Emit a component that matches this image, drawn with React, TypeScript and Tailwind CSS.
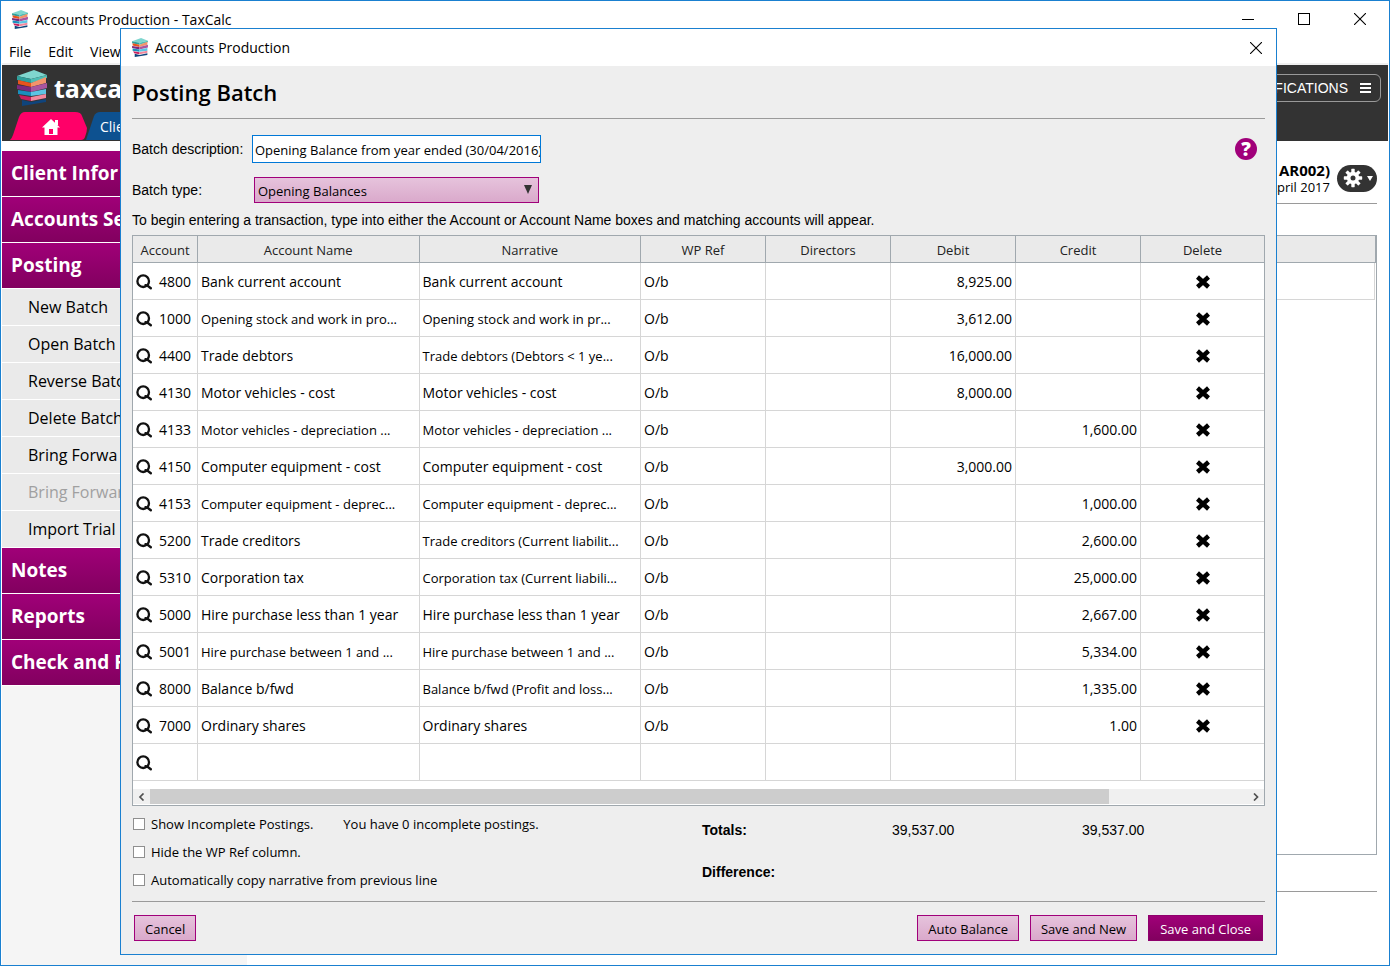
import type { ReactNode } from "react";

type Posting = {
  account: string;
  name: string;
  narrative: string;
  debit?: string;
  credit?: string;
};

const postings: Posting[] = [
  { account: "4800", name: "Bank current account", narrative: "Bank current account", debit: "8,925.00" },
  { account: "1000", name: "Opening stock and work in pro...", narrative: "Opening stock and work in pr...", debit: "3,612.00" },
  { account: "4400", name: "Trade debtors", narrative: "Trade debtors (Debtors < 1 ye...", debit: "16,000.00" },
  { account: "4130", name: "Motor vehicles - cost", narrative: "Motor vehicles - cost", debit: "8,000.00" },
  { account: "4133", name: "Motor vehicles - depreciation ...", narrative: "Motor vehicles - depreciation ...", credit: "1,600.00" },
  { account: "4150", name: "Computer equipment - cost", narrative: "Computer equipment - cost", debit: "3,000.00" },
  { account: "4153", name: "Computer equipment - deprec...", narrative: "Computer equipment - deprec...", credit: "1,000.00" },
  { account: "5200", name: "Trade creditors", narrative: "Trade creditors (Current liabilit...", credit: "2,600.00" },
  { account: "5310", name: "Corporation tax", narrative: "Corporation tax (Current liabili...", credit: "25,000.00" },
  { account: "5000", name: "Hire purchase less than 1 year", narrative: "Hire purchase less than 1 year", credit: "2,667.00" },
  { account: "5001", name: "Hire purchase between 1 and ...", narrative: "Hire purchase between 1 and ...", credit: "5,334.00" },
  { account: "8000", name: "Balance b/fwd", narrative: "Balance b/fwd (Profit and loss...", credit: "1,335.00" },
  { account: "7000", name: "Ordinary shares", narrative: "Ordinary shares", credit: "1.00" },
];

const columns = [
  { title: "Account", width: "w-[65px]" },
  { title: "Account Name", width: "w-auto" },
  { title: "Narrative", width: "w-auto" },
  { title: "WP Ref", width: "w-[125px]" },
  { title: "Directors", width: "w-[125px]" },
  { title: "Debit", width: "w-[125px]" },
  { title: "Credit", width: "w-[125px]" },
  { title: "Delete", width: "w-[123px]" },
];

const batchItems = [
  { label: "New Batch" },
  { label: "Open Batch" },
  { label: "Reverse Batch" },
  { label: "Delete Batch" },
  { label: "Bring Forwa" },
  { label: "Bring Forward", disabled: true },
  { label: "Import Trial" },
];

const Logo = ({ className }: { className: string }) => (
  <svg viewBox="0 0 30 36" className={className} aria-hidden="true">
    <path d="M0 6 17 0 30 5 14 9Z" fill="#7fd6cf" />
    <path d="M0 6 14 9V13L0 10Z" fill="#2f9f9b" />
    <path d="M14 9 30 5V8L14 13Z" fill="#4dbdb5" />
    <path d="M1 10 14 13V17L1 14Z" fill="#e8541d" />
    <path d="M14 13 29 7V13L14 17Z" fill="#f3936b" />
    <path d="M0 15 14 17V22L0 19Z" fill="#7b2a7d" />
    <path d="M14 17 30 13V18L14 22Z" fill="#a9559f" />
    <path d="M1 20 14 22V26L1 24Z" fill="#1a8fbd" />
    <path d="M14 22 29 19V24L14 26Z" fill="#5cc4e4" />
    <path d="M2 25 14 27V31L4 29Z" fill="#c8205f" />
    <path d="M14 27 29 24V28L14 31Z" fill="#f2879d" />
    <path d="M5 30 14 32 29 29V32L5 36Z" fill="#0f447c" />
  </svg>
);

const SearchIcon = () => (
  <svg viewBox="0 0 16 16" className="h-4 w-4 shrink-0" fill="none" stroke="#111" aria-hidden="true">
    <circle cx="7.2" cy="7.2" r="5.8" strokeWidth="2.3" />
    <path d="M9.5 11.2 12 12 14.8 14.2" strokeWidth="2.4" strokeLinecap="round" />
  </svg>
);

const CrossIcon = () => (
  <svg viewBox="0 0 16 14" className="h-3.5 w-4" aria-hidden="true">
    <path d="M2.5 2 13.500 12M13.500 2 2.500 12" stroke="#000" strokeWidth="4.4" fill="none" />
  </svg>
);

const CloseIcon = () => (
  <svg viewBox="0 0 12 12" className="h-3 w-3" aria-hidden="true">
    <path d="M0 0 12 12M12 0 0 12" stroke="#000" strokeWidth="1.1" fill="none" />
  </svg>
);

const GearIcon = () => (
  <svg viewBox="-10 -10 20 20" className="h-5 w-5" aria-hidden="true">
    <g fill="#fff">
      {[0, 45, 90, 135].map((angle) => (
        <rect key={angle} x="-1.7" y="-9.2" width="3.4" height="18.4" rx="0.6" transform={`rotate(${angle})`} />
      ))}
      <circle r="6.2" />
    </g>
    <circle r="2.5" fill="#333" />
  </svg>
);

const SideHeader = ({ children }: { children: ReactNode }) => (
  <button
    type="button"
    className="block h-[46px] w-full border-b border-white bg-linear-to-b from-[#a00078] to-[#82005f] pb-0.5 pl-[9px] text-left text-[19px] leading-6 font-bold whitespace-nowrap text-white"
  >
    {children}
  </button>
);

const LightButton = ({ children }: { children: ReactNode }) => (
  <button
    type="button"
    className="h-[26px] border border-[#a0007a] bg-linear-to-b from-[#e6c3dc] to-[#daa9cb] px-[10px] pt-0.5 text-[13px] leading-5 whitespace-nowrap"
  >
    {children}
  </button>
);

const CheckRow = ({ id, label }: { id: string; label: string }) => (
  <div className="flex h-7 items-center gap-[6px]">
    <input id={id} type="checkbox" className="h-3 w-3 shrink-0 appearance-none border border-[#8f8f8f] bg-white checked:bg-[#a0007a]" />
    <label htmlFor={id} className="text-[13px] leading-5 whitespace-nowrap">
      {label}
    </label>
  </div>
);

// Long names are set one size down so that they stay inside their column
const cellSize = (text: string) => (text.endsWith("...") ? "text-[13px]" : "text-[14px]");

const PostingTable = () => (
  <div className="border border-[#a0a8ae] bg-white">
    <table className="w-full table-fixed border-separate border-spacing-0 text-[14px] leading-5">
      <thead>
        <tr>
          {columns.map((column) => (
            <th
              key={column.title}
              scope="col"
              className={`${column.width} h-[27px] border-r border-b border-[#a0a8ae] bg-[#eaeaea] p-0 pt-0.5 text-[13px] font-normal text-[#222] last:border-r-0`}
            >
              {column.title}
            </th>
          ))}
        </tr>
      </thead>
      <tbody className="[&_td]:h-[37px] [&_td]:border-r [&_td]:border-b [&_td]:border-[#d6d6d6] [&_td]:px-[3px] [&_td]:pt-0.5 [&_td]:pb-0 [&_td]:whitespace-nowrap [&_td:last-child]:border-r-0">
        {postings.map((row) => (
          <tr key={row.account}>
            <td>
              <div className="flex items-center gap-[7px]">
                <SearchIcon />
                {row.account}
              </div>
            </td>
            <td className={cellSize(row.name)}>{row.name}</td>
            <td className={cellSize(row.narrative)}>{row.narrative}</td>
            <td>O/b</td>
            <td />
            <td className="text-right">{row.debit}</td>
            <td className="text-right">{row.credit}</td>
            <td>
              <button type="button" aria-label={`Delete ${row.account}`} className="mx-auto block">
                <CrossIcon />
              </button>
            </td>
          </tr>
        ))}
        <tr>
          <td>
            <SearchIcon />
          </td>
          {columns.slice(1).map((column) => (
            <td key={column.title} />
          ))}
        </tr>
      </tbody>
    </table>
    <div className="mt-2 mb-px flex h-[15px] items-center bg-[#f0f0f0]">
      <button type="button" aria-label="Scroll left" className="flex w-[17px] justify-center">
        <svg viewBox="0 0 8 8" className="h-2 w-2" aria-hidden="true">
          <path d="M5.5 0.5 2 4 5.5 7.5" stroke="#505050" strokeWidth="1.7" fill="none" />
        </svg>
      </button>
      <div className="h-full flex-1">
        <div className="h-full w-[87.4%] bg-[#cdcdcd]" />
      </div>
      <button type="button" aria-label="Scroll right" className="flex w-[17px] justify-center">
        <svg viewBox="0 0 8 8" className="h-2 w-2" aria-hidden="true">
          <path d="M2 0.5 5.5 4 2 7.5" stroke="#505050" strokeWidth="1.7" fill="none" />
        </svg>
      </button>
    </div>
  </div>
);

const PostingBatchDialog = () => (
  <div role="dialog" aria-labelledby="dialog-title" className="absolute top-7 right-[117px] left-[120px] border border-[#1a80d0] bg-[#eeeeee]">
    <div className="flex h-[37px] items-center bg-white pr-[14px] pl-[11px]">
      <Logo className="h-[19px] w-4" />
      <span id="dialog-title" className="ml-[7px] text-[14px] leading-5">
        Accounts Production
      </span>
      <button type="button" aria-label="Close dialog" className="ml-auto">
        <CloseIcon />
      </button>
    </div>

    <div className="px-[11px]">
      <h1 className="flex h-[53px] items-center border-b border-[#9a9a9a] text-[22px] leading-8 font-semibold">Posting Batch</h1>

      <div className="mt-4 flex h-7 items-center">
        <label htmlFor="batch-description" className="w-[120px] font-['Liberation_Sans'] text-[14px] leading-5">
          Batch description:
        </label>
        <input
          id="batch-description"
          type="text"
          defaultValue="Opening Balance from year ended (30/04/2016)"
          className="h-7 w-[289px] border border-[#0078d7] bg-white pt-0.5 pl-[2px] text-[13px] leading-5 outline-none"
        />
        <button
          type="button"
          aria-label="Help"
          className="mr-2 ml-auto flex h-[22px] w-[22px] items-center justify-center rounded-full bg-[#a0007a] text-[19px] leading-5 font-extrabold text-white"
        >
          ?
        </button>
      </div>

      <div className="mt-[14px] flex h-[26px] items-center">
        <label htmlFor="batch-type" className="w-[122px] font-['Liberation_Sans'] text-[14px] leading-5">
          Batch type:
        </label>
        <div className="relative">
          <select
            id="batch-type"
            className="block h-[26px] w-[285px] appearance-none border border-[#a0007a] bg-linear-to-b from-[#e6c3dc] to-[#daa9cb] pt-0.5 pl-[3px] text-[13px] leading-5"
          >
            <option>Opening Balances</option>
          </select>
          <svg viewBox="0 0 8 9" className="pointer-events-none absolute top-2 right-[7px] h-[9px] w-2" aria-hidden="true">
            <path d="M0 0H8L4 9Z" fill="#333" />
          </svg>
        </div>
      </div>

      <p className="flex h-8 items-center pt-px font-['Liberation_Sans'] text-[14px] leading-5">
        To begin entering a transaction, type into either the Account or Account Name boxes and matching accounts will appear.
      </p>

      <PostingTable />

      <div className="flex h-24 border-b border-[#9a9a9a] pt-1">
        <div className="w-[570px] pl-px">
          <div className="flex items-center gap-[30px]">
            <CheckRow id="show-incomplete" label="Show Incomplete Postings." />
            <span className="text-[13px] leading-5">You have 0 incomplete postings.</span>
          </div>
          <CheckRow id="hide-wp-ref" label="Hide the WP Ref column." />
          <CheckRow id="copy-narrative" label="Automatically copy narrative from previous line" />
        </div>
        <dl className="grid grid-cols-[190px_190px_auto] content-start gap-y-[22px] pt-[10px] font-['Liberation_Sans'] text-[14px] leading-5">
          <dt className="font-bold">Totals:</dt>
          <dd>39,537.00</dd>
          <dd>39,537.00</dd>
          <dt className="font-bold">Difference:</dt>
        </dl>
      </div>

      <div className="flex gap-[11px] px-[2px] pt-[13px] pb-[13px]">
        <LightButton>Cancel</LightButton>
        <div className="flex-1" />
        <LightButton>Auto Balance</LightButton>
        <LightButton>Save and New</LightButton>
        <button
          type="button"
          className="h-[26px] border border-[#8f006c] bg-linear-to-b from-[#a00078] to-[#82005f] px-[11px] pt-0.5 text-[13px] leading-5 whitespace-nowrap text-white"
        >
          Save and Close
        </button>
      </div>
    </div>
  </div>
);

const App = () => (
  <div className="relative flex h-screen min-h-[966px] flex-col bg-white pr-1 pb-2 font-['Open_Sans','Noto_Sans',sans-serif] text-black">
    <div className="flex flex-1 flex-col border border-[#1a80d0] px-px">
      <div className="flex h-9 items-center pr-[22px] pl-[10px]">
        <Logo className="h-[19px] w-4" />
        <span className="ml-[7px] pt-px text-[14px] leading-5">Accounts Production - TaxCalc</span>
        <div className="ml-auto flex items-center gap-11">
          <button type="button" aria-label="Minimise" className="h-px w-3 bg-black" />
          <button type="button" aria-label="Maximise" className="h-3 w-3 border border-black" />
          <button type="button" aria-label="Close window">
            <CloseIcon />
          </button>
        </div>
      </div>
      <nav className="flex h-7 items-center gap-[17px] border-b-2 border-[#f0f0f0] pt-1 pl-[7px] text-[14px] leading-5">
        <button type="button">File</button>
        <button type="button">Edit</button>
        <button type="button">View</button>
      </nav>

      <header className="flex h-[76px] justify-between bg-[#333333]">
        <div className="flex flex-col justify-between">
          <div className="flex items-center pt-[5px] pl-[15px]">
            <Logo className="h-9 w-[30px]" />
            <span className="ml-[7px] text-[25px] leading-8 font-bold text-white">taxca</span>
          </div>
          <div className="relative mb-px h-7">
            <svg viewBox="0 0 160 28" className="h-7 w-40" aria-hidden="true">
              <path d="M84 28 92 4Q94 0 98 0H160V28Z" fill="#0d5190" />
              <path d="M8 28Q10 26 11 23L17 5Q19 0 23 0H73Q79 0 80 4L85 16Q85 20 83 25 82 28 79 28Z" fill="#ff0068" />
              <path d="M49 7 58 15.5H55.5V23H42.5V15.5H40Z" fill="#fff" />
              <path d="M53 8H56V13H53Z" fill="#fff" />
              <path d="M47 17H51V22H47Z" fill="#ff0068" />
            </svg>
            <a href="#clients" className="absolute top-[5px] left-[98px] text-[14px] leading-5 text-white">
              Clients
            </a>
          </div>
        </div>
        <button
          type="button"
          className="mt-[9px] mr-[7px] flex h-7 items-center gap-3 rounded-md border border-[#999] pr-[9px] pl-3 font-['Liberation_Sans'] text-[14px] leading-5 text-white"
        >
          NOTIFICATIONS
          <svg viewBox="0 0 11 10" className="h-[10px] w-[11px]" aria-hidden="true">
            <path d="M0 1H11M0 5H11M0 9H11" stroke="#fff" strokeWidth="2" />
          </svg>
        </button>
      </header>

      <div className="flex flex-1">
        <aside className="mt-[10px] w-[245px] bg-[#f5f5f5]">
          <SideHeader>Client Infor</SideHeader>
          <SideHeader>Accounts Se</SideHeader>
          <SideHeader>Posting</SideHeader>
          {batchItems.map((item) => (
            <button
              key={item.label}
              type="button"
              disabled={item.disabled}
              className="block h-[37px] w-full border-b border-white bg-[#eaeaea] pl-[26px] text-left text-[16px] leading-6 whitespace-nowrap disabled:text-[#a0a0a0]"
            >
              {item.label}
            </button>
          ))}
          <SideHeader>Notes</SideHeader>
          <SideHeader>Reports</SideHeader>
          <SideHeader>Check and F</SideHeader>
        </aside>

        <main className="flex flex-1 flex-col pr-[11px] pl-4">
          <div className="flex h-[63px] items-center justify-end gap-[7px] border-b border-[#9a9a9a] pt-[12px]">
            <div className="pt-0.5 text-right leading-[17px]">
              <p className="text-[15px] font-bold">AR002)</p>
              <p className="text-[13px]">April 2017</p>
            </div>
            <button type="button" aria-label="Settings" className="flex h-[27px] w-10 items-center rounded-full bg-[#333] pl-[6px]">
              <GearIcon />
              <svg viewBox="0 0 6 5" className="ml-1 h-[5px] w-[6px]" aria-hidden="true">
                <path d="M0 0H6L3 5Z" fill="#fff" />
              </svg>
            </button>
          </div>
          <div className="mt-[31px] h-[620px] border border-[#a0a8ae]">
            <div className="h-[27px] border-r border-b border-[#a0a8ae] bg-[#eaeaea]" />
            <div className="mr-px h-[37px] border-r border-b border-[#d6d6d6]" />
          </div>
          <div className="mt-9 border-t border-[#9a9a9a]" />
        </main>
      </div>
    </div>

    <PostingBatchDialog />
  </div>
);

export default App;
